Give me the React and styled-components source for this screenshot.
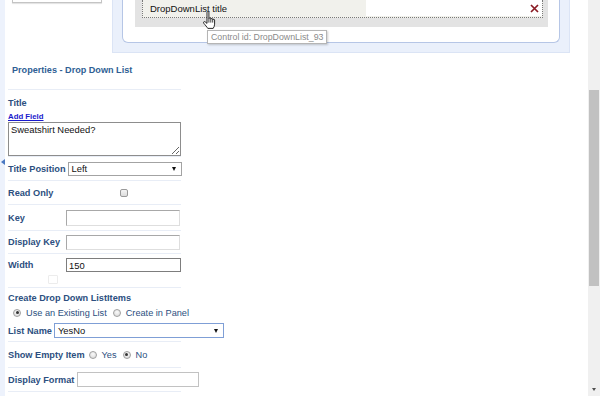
import React from "react";
import styled, { createGlobalStyle } from "styled-components";

const GlobalStyle = createGlobalStyle`
  html, body {
    margin: 0;
    padding: 0;
    overflow: hidden;
    background: #fff;
  }
  body {
    font-family: "Liberation Sans", Arial, sans-serif;
    font-size: 9px;
  }
`;

export default function App() {
  return (
    <>
      <GlobalStyle />
      <Page>
        <LeftStrip>
          <CollapseArrow />
        </LeftStrip>

        <Main>
          <TopRow>
            <StubBox />
            <PreviewOuter>
              <PreviewInner>
                <DesignArea>
                  <ControlBox>
                    <ControlTitle>DropDownList title</ControlTitle>
                    <ControlInput>
                      <svg width="9" height="9" viewBox="0 0 9 9">
                        <path d="M1 1L8 8M8 1L1 8" stroke="#8a1b24" strokeWidth="1.7" />
                      </svg>
                    </ControlInput>
                  </ControlBox>
                </DesignArea>
              </PreviewInner>
            </PreviewOuter>
          </TopRow>

          <HandCursor />
          <Tooltip>Control id: DropDownList_93</Tooltip>

          <Form>
            <Header>Properties - Drop Down List</Header>

            <Section $h={67} $pt={7}>
              <Label>Title</Label>
              <AddField href="#">Add Field</AddField>
              <TextArea readOnly value="Sweatshirt Needed?" />
            </Section>

            <Row $h={24}>
              <Label>Title Position</Label>
              <SelectBox $w={114}>
                Left
                <Caret />
              </SelectBox>
            </Row>

            <Row $h={24}>
              <Label $w={110}>Read Only</Label>
              <CheckBox />
            </Row>

            <Row $h={26}>
              <Label $w={58} $gap={0}>Key</Label>
              <TextInput $w={114} $h={16} $tone="inset" readOnly value="" />
            </Row>

            <Row $h={23}>
              <Label $w={58} $gap={0}>Display Key</Label>
              <TextInput $w={114} $h={15} $tone="inset" readOnly value="" />
            </Row>

            <Section $h={34} $pt={4}>
              <Line>
                <Label $w={58} $gap={0}>Width</Label>
                <TextInput $w={115} $h={14} $tone="dark" readOnly value="150" />
              </Line>
              <FaintCheck />
            </Section>

            <Section $h={54} $pt={4}>
              <Label>Create Drop Down ListItems</Label>
              <RadioLine $indent={5}>
                <Radio $checked />
                <RadioText>Use an Existing List</RadioText>
                <Radio />
                <RadioText>Create in Panel</RadioText>
              </RadioLine>
              <Line>
                <Label>List Name</Label>
                <SelectBox $w={170} $h={15} $tone="blue">
                  YesNo
                  <Caret />
                </SelectBox>
              </Line>
            </Section>

            <Row $h={26}>
              <Label $gap={4}>Show Empty Item</Label>
              <Radio />
              <RadioText>Yes</RadioText>
              <Radio $checked />
              <RadioText>No</RadioText>
            </Row>

            <Row $h={24}>
              <Label $gap={3}>Display Format</Label>
              <TextInput $w={122} $h={15} $tone="light" readOnly value="" />
            </Row>
          </Form>
        </Main>

        <ScrollTrack>
          <ScrollThumb />
          <ScrollDown />
        </ScrollTrack>
      </Page>
    </>
  );
}

function HandCursor() {
  return (
    <CursorWrap>
      <svg width="15" height="19" viewBox="0 0 15 19">
        <path
          d="M5 1.4C5 0.3 6.9 0.3 6.9 1.4V7.6C6.9 6.6 8.8 6.6 8.8 7.6V8.3C8.8 7.3 10.7 7.3 10.7 8.3V9C10.7 8 12.6 8 12.6 9V13.2C12.6 15 11.8 16.3 11.2 17.4H5.8C5.1 16.2 3 13.8 1.8 12.3C1 11.2 2.1 10.1 3.2 10.9L5 12.4Z"
          fill="#fff"
          stroke="#111"
          strokeWidth="0.9"
          strokeLinejoin="round"
        />
        <path d="M6.9 7.6V11.6M8.8 8.3V11.6M10.7 9V11.6" stroke="#111" strokeWidth="0.8" />
      </svg>
    </CursorWrap>
  );
}

const Page = styled.div`
  display: flex;
  width: 600px;
  height: 396px;
  overflow: hidden;
  background: #fff;
`;

const LeftStrip = styled.div`
  width: 5px;
  flex-shrink: 0;
  background: #edf2fc;
  display: flex;
  flex-direction: column;
  padding-top: 159px;
  box-sizing: border-box;
`;

const CollapseArrow = styled.div`
  width: 0;
  height: 0;
  margin-left: 1px;
  border-top: 3.5px solid transparent;
  border-bottom: 3.5px solid transparent;
  border-right: 4px solid #4b79c2;
`;

const Main = styled.div`
  position: relative;
  flex: 1;
  display: flex;
  flex-direction: column;
`;

const TopRow = styled.div`
  display: flex;
  align-items: flex-start;
  height: 53px;
  padding-left: 7px;
`;

const StubBox = styled.div`
  width: 90px;
  height: 3px;
  box-sizing: border-box;
  border: 1px solid #c4c4c4;
  border-top: none;
  background: #fff;
  box-shadow: 0 1px 1px rgba(0, 0, 0, 0.12);
`;

const PreviewOuter = styled.div`
  margin-left: 10px;
  width: 458px;
  height: 53px;
  box-sizing: border-box;
  background: #eaf0fb;
  border: 1px solid #dbe4f5;
  border-top: none;
  padding: 0 9px 9px 9px;
`;

const PreviewInner = styled.div`
  height: 100%;
  box-sizing: border-box;
  background: #fff;
  border: 1px solid #b6c6e6;
  border-top: none;
  border-radius: 0 0 6px 6px;
  padding: 0 11px 0 12px;
`;

const DesignArea = styled.div`
  height: 27px;
  box-sizing: border-box;
  background: #e3e3e3;
  padding: 0 5px 0 7px;
`;

const ControlBox = styled.div`
  display: flex;
  height: 18px;
  box-sizing: border-box;
  border: 1px dotted #7a7a7a;
  border-top: none;
  background: #f1f1ec;
`;

const ControlTitle = styled.div`
  flex: 1;
  padding: 3px 0 0 7px;
  font-size: 9.5px;
  color: #111;
  line-height: 12px;
`;

const ControlInput = styled.div`
  width: 176px;
  height: 16px;
  background: #fff;
  display: flex;
  justify-content: flex-end;
  align-items: center;
  padding-right: 3px;
  box-sizing: border-box;
`;

const CursorWrap = styled.div`
  position: absolute;
  left: 197px;
  top: 11px;
  line-height: 0;
`;

const Tooltip = styled.div`
  position: absolute;
  left: 202px;
  top: 30px;
  height: 14px;
  box-sizing: border-box;
  padding: 0 3px;
  border: 1px solid #b5b5b5;
  background: #fff;
  color: #8a8a8a;
  font-size: 8.8px;
  line-height: 12px;
  white-space: nowrap;
  box-shadow: 1px 1px 2px rgba(0, 0, 0, 0.2);
`;

const Form = styled.div`
  margin-left: 3px;
  width: 173px;
  display: flex;
  flex-direction: column;
`;

const Header = styled.div`
  height: 37px;
  box-sizing: border-box;
  padding: 12px 0 0 4px;
  font-weight: bold;
  font-size: 9.1px;
  line-height: 11px;
  color: #2e5e94;
  border-bottom: 1px solid #e8edf6;
  white-space: nowrap;
`;

const Row = styled.div`
  display: flex;
  align-items: center;
  height: ${(p) => p.$h}px;
  box-sizing: border-box;
  border-bottom: 1px solid #e8edf6;
  white-space: nowrap;
`;

const Section = styled.div`
  display: flex;
  flex-direction: column;
  height: ${(p) => p.$h}px;
  box-sizing: border-box;
  padding-top: ${(p) => p.$pt ?? 6}px;
  border-bottom: 1px solid #e8edf6;
`;

const Line = styled.div`
  display: flex;
  align-items: center;
  white-space: nowrap;
`;

const RadioLine = styled(Line)`
  padding-left: ${(p) => p.$indent || 0}px;
  height: 13px;
  margin: 2px 0 4px;
`;

const Label = styled.span`
  display: inline-block;
  flex-shrink: 0;
  width: ${(p) => (p.$w ? `${p.$w}px` : "auto")};
  margin-right: ${(p) => p.$gap ?? 2}px;
  padding-top: 1px;
  font-weight: bold;
  font-size: 9.2px;
  line-height: 11px;
  color: #2c4f80;
  white-space: nowrap;
`;

const AddField = styled.a`
  margin-top: 3px;
  font-size: 7.8px;
  line-height: 9px;
  font-weight: bold;
  color: #1a1acc;
  text-decoration: underline;
`;

const TextArea = styled.textarea`
  margin-top: 1px;
  width: 173px;
  height: 34px;
  box-sizing: border-box;
  border: 1px solid #8d8d8d;
  padding: 1px 2px;
  font-family: "Liberation Sans", Arial, sans-serif;
  font-size: 9.4px;
  color: #111;
  outline: none;
`;

const toneBorder = {
  inset: "#a8a8a8 #dedede #dedede #a8a8a8",
  dark: "#7d7d7d",
  light: "#c2c2c2",
  blue: "#7f9fd6",
};

const TextInput = styled.input`
  width: ${(p) => p.$w}px;
  height: ${(p) => p.$h}px;
  box-sizing: border-box;
  border: 1px solid;
  border-color: ${(p) => toneBorder[p.$tone] || "#a0a0a0"};
  padding: 0 2px;
  font-family: "Liberation Sans", Arial, sans-serif;
  font-size: 9.4px;
  color: #111;
  outline: none;
  flex-shrink: 0;
`;

const SelectBox = styled.div`
  position: relative;
  flex-shrink: 0;
  width: ${(p) => p.$w}px;
  height: ${(p) => p.$h || 14}px;
  box-sizing: border-box;
  border: 1px solid ${(p) => toneBorder[p.$tone] || "#a3a3a3"};
  background: #fff;
  padding: 0 3px;
  font-size: 9.4px;
  line-height: ${(p) => (p.$h || 14) - 2}px;
  color: #111;
  display: flex;
  align-items: center;
  justify-content: space-between;
`;

const Caret = styled.span`
  width: 0;
  height: 0;
  margin-right: 2px;
  border-left: 2.5px solid transparent;
  border-right: 2.5px solid transparent;
  border-top: 4px solid #111;
`;

const CheckBox = styled.span`
  width: 8px;
  height: 8px;
  box-sizing: border-box;
  border: 1px solid #9a9a9a;
  border-radius: 2px;
  background: linear-gradient(#f4f4f4, #dcdcdc);
  flex-shrink: 0;
`;

const FaintCheck = styled.span`
  margin: 3px 0 0 40px;
  width: 10px;
  height: 9px;
  box-sizing: border-box;
  border: 1px solid #ececec;
  border-radius: 1px;
`;

const Radio = styled.span`
  position: relative;
  width: 8px;
  height: 8px;
  box-sizing: border-box;
  border: 1px solid #a0a0a0;
  border-radius: 50%;
  background: radial-gradient(circle at 50% 35%, #fafafa, #d6d6d6);
  flex-shrink: 0;

  &::after {
    content: "";
    display: ${(p) => (p.$checked ? "block" : "none")};
    position: absolute;
    left: 1.5px;
    top: 1.5px;
    width: 3px;
    height: 3px;
    border-radius: 50%;
    background: #333;
  }
`;

const RadioText = styled.span`
  margin: 0 6px 0 5px;
  padding-top: 1px;
  font-size: 9.2px;
  line-height: 11px;
  color: #2c4f80;
`;

const ScrollTrack = styled.div`
  width: 12px;
  flex-shrink: 0;
  background: #f0f0f0;
  display: flex;
  flex-direction: column;
  align-items: center;
`;

const ScrollThumb = styled.div`
  margin-top: 90px;
  width: 10px;
  height: 196px;
  background: #c1c1c1;
`;

const ScrollDown = styled.span`
  margin-top: auto;
  margin-bottom: 5px;
  width: 0;
  height: 0;
  border-left: 2.5px solid transparent;
  border-right: 2.5px solid transparent;
  border-top: 3px solid #505050;
`;
